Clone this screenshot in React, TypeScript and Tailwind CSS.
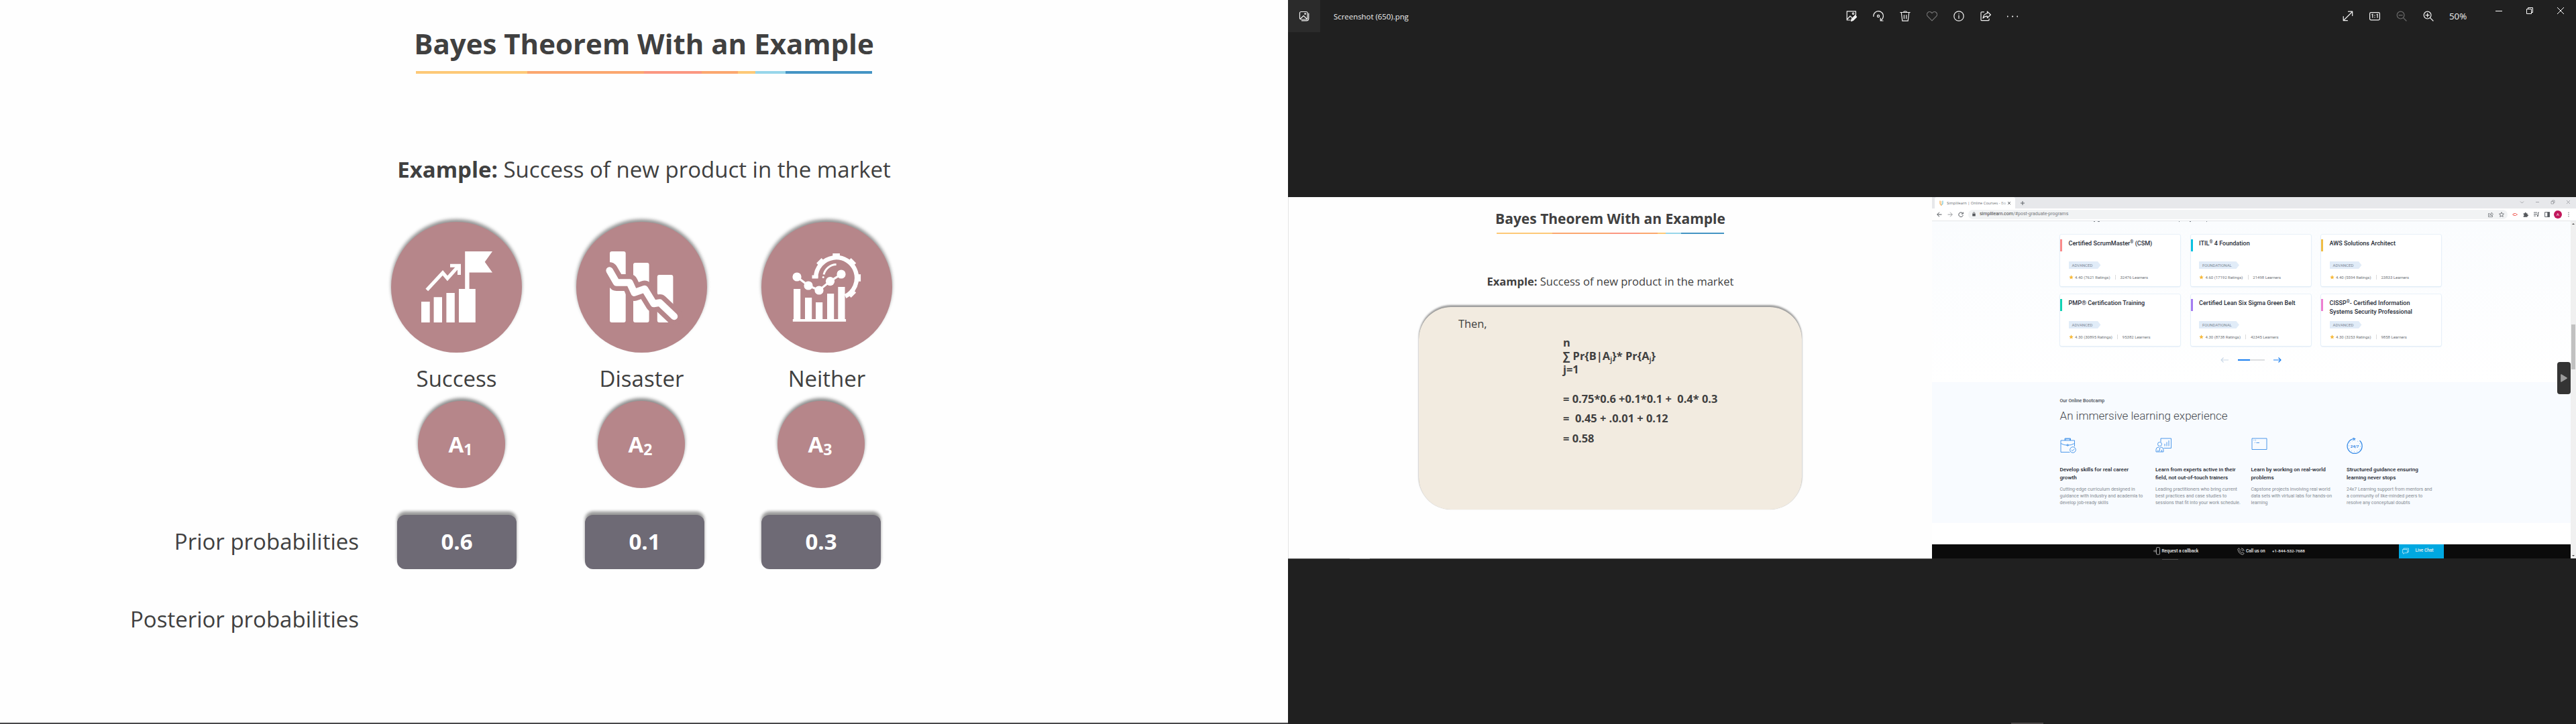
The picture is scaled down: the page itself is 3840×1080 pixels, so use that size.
import React from 'react'

type Accent = { color: string; width: string }

const accents: Accent[] = [
  { color: 'bg-[#fdc977]', width: 'w-[24.5%]' },
  { color: 'bg-[#fba76f]', width: 'w-[25.5%]' },
  { color: 'bg-[#fb9781]', width: 'w-[12.7%]' },
  { color: 'bg-[#fba76f]', width: 'w-[7.9%]' },
  { color: 'bg-[#fdc977]', width: 'w-[3.8%]' },
  { color: 'bg-[#97d6ea]', width: 'w-[6.6%]' },
  { color: 'bg-[#4494c4]', width: 'w-[19%]' },
]

function AccentBar({ className }: { className: string }) {
  return (
    <div className={`flex ${className}`}>
      {accents.map((a, i) => (
        <span key={i} className={`h-full ${a.color} ${a.width}`} />
      ))}
    </div>
  )
}

/* ---------- Slide with outcomes ---------- */

function GrowthIcon() {
  return (
    <svg viewBox="583 331 195 195" className="size-full" fill="#fff">
      <path d="M628 450h12.700v31h-12.700zM646.600 443.200h12.400v37.800h-12.400zM665.400 437h12.400v44h-12.400zM684 431h24.800v50H684z" />
      <path d="M693.200 375H734l-11.300 15.700L734 406.500h-34.400V432h-6.400z" />
      <path d="M636.300 432.500L660 407l7 8.200 17-19" fill="none" stroke="#fff" strokeWidth="5.200" />
      <path d="M671 396.300h13.500V410" fill="none" stroke="#fff" strokeWidth="5" />
    </svg>
  )
}

function DeclineIcon() {
  const line = 'M908.600 403.500L919 421.500h19.500l7 15 15.500-5.500 13.500 22 9-1.500L1005 472'
  return (
    <svg viewBox="859 331 195 195" className="size-full" fill="#fff">
      <rect x="909" y="375" width="23.700" height="106" rx="3" />
      <rect x="944" y="392" width="23.600" height="89" rx="3" />
      <rect x="979.800" y="410" width="23.600" height="71" rx="3" />
      <path d={line} fill="none" stroke="#b6868a" strokeWidth="25" strokeLinejoin="round" strokeLinecap="round" />
      <path d={line} fill="none" stroke="#fff" strokeWidth="10.500" strokeLinejoin="round" strokeLinecap="round" />
    </svg>
  )
}

function AnalysisIcon() {
  const teeth = [0, 45, -45, 90, 135]
  const nodes = [[1188, 413], [1205, 426], [1221, 433], [1237.5, 419.6], [1254, 409]]
  return (
    <svg viewBox="1135 331 195 195" className="size-full" fill="#fff">
      <path d="M1183 431h10.200v46H1183zM1200 444h10.200v33H1200zM1216 451h10.200v26H1216zM1233 438h10.200v39H1233zM1249.300 428h10.200v49h-10.200zM1181.800 476h79.300v3.700h-79.300z" />
      <path d="M1216.100 414.500A30.500 30.500 0 1 1 1260 442" fill="none" stroke="#fff" strokeWidth="6.500" />
      {teeth.map((t) => (
        <rect key={t} x="1241.300" y="378" width="10.600" height="6" transform={`rotate(${t} 1246.600 414.500)`} />
      ))}
      <path d="M1210.500 410.500h9v5h-9z" />
      <path d="M1228 409.500A19.500 19.500 0 0 1 1246.600 394.500" fill="none" stroke="#fff" strokeWidth="3" />
      <circle cx="1227.200" cy="413.500" r="1.500" />
      <path d="M1188 413l17 13 16 7 16.500-13.400L1254 409" fill="none" stroke="#fff" strokeWidth="3.200" />
      {nodes.map(([x, y]) => (
        <circle key={x} cx={x} cy={y} r="6.600" />
      ))}
    </svg>
  )
}

const outcomes = [
  { label: 'Success', Icon: GrowthIcon },
  { label: 'Disaster', Icon: DeclineIcon },
  { label: 'Neither', Icon: AnalysisIcon },
]

function PriorBox({ value, className = '' }: { value: string; className?: string }) {
  return (
    <div className={`flex h-[81px] w-[178px] items-center justify-center rounded-xl bg-[#6e6a75] pb-[2px] font-bold text-white shadow-[0_-5px_4px_rgba(0,0,0,0.4)] ${className}`}>
      {value}
    </div>
  )
}

function OutcomeSlide() {
  return (
    <section className="flex h-[1080px] w-[1920px] shrink-0 flex-col bg-[#fefefe] pt-[35px] text-[33px] leading-[48px] text-[#404040]">
      <h1 className="text-center text-[42px] font-bold leading-[60px]">Bayes Theorem With an Example</h1>
      <AccentBar className="mx-auto mt-[11px] h-1 w-[681px]" />
      <p className="mt-[119px] text-center">
        <b>Example:</b> Success of new product in the market
      </p>
      <div className="mt-[54px] flex gap-[81px] pl-[583px]">
        {outcomes.map(({ label, Icon }) => (
          <div key={label} className="flex w-[195px] flex-col items-center">
            <div className="size-[195px] rounded-full bg-[#b6868a] shadow-[0_-4px_5px_rgba(0,0,0,0.42)]">
              <Icon />
            </div>
            <span className="mt-[15px]">{label}</span>
          </div>
        ))}
      </div>
      <div className="mt-[9px] flex gap-[138px] pl-[623px]">
        {['1', '2', '3'].map((n) => (
          <div key={n} className="flex size-[130px] items-center justify-center rounded-full bg-[#b6868a] pr-[3px] font-bold text-white shadow-[0_-4px_5px_rgba(0,0,0,0.45)]">
            A<span className="relative top-[7px] text-[23px]">{n}</span>
          </div>
        ))}
      </div>
      <div className="mt-[40px] flex items-center">
        <span className="w-[535px] pb-[2px] text-right">Prior probabilities</span>
        <PriorBox value="0.6" className="ml-[57px]" />
        <PriorBox value="0.1" className="ml-[102px]" />
        <PriorBox value="0.3" className="ml-[85px]" />
      </div>
      <span className="mt-[51px] w-[535px] text-right">Posterior probabilities</span>
      <div className="mt-auto h-[2px] bg-[#48484a]" />
    </section>
  )
}

/* ---------- Photo viewer chrome ---------- */

function Glyph({ children, className = '', box = '0 0 16 16' }: { children: React.ReactNode; className?: string; box?: string }) {
  return (
    <svg viewBox={box} className={`size-4 shrink-0 ${className}`} fill="none" stroke="#f2f2f2" strokeWidth="1.200" strokeLinecap="round" strokeLinejoin="round">
      {children}
    </svg>
  )
}

function ViewerBar() {
  return (
    <header className="flex h-12 items-center text-[#f0f0f0]">
      <div className="flex size-12 items-center justify-center bg-[#2b2b2b]">
        <Glyph>
          <rect x="1.500" y="1.500" width="11.500" height="11.500" rx="2" />
          <path d="M2.500 12l4.700-4.500L12 12M14.800 4v7.500a3.300 3.300 0 0 1-3.300 3.300H4.500" />
          <circle cx="9.600" cy="4.600" r=".8" />
        </Glyph>
      </div>
      <span className="ml-5 w-[764px] pt-px text-[11.4px]">Screenshot (650).png</span>
      <div className="flex gap-6">
        <Glyph>
          <path d="M6 14H1.200V.8h13.200V7M1.800 12.500L6 8l2.500 2.200" />
          <circle cx="10.500" cy="4.300" r="1.200" />
          <path d="M8.300 12.200L13.500 7l2.200 2.200-5.200 5.200-3 1z" fill="#f2f2f2" />
        </Glyph>
        <Glyph>
          <path d="M.8 8.500a7.300 7.300 0 1 1 11.500 5.400M15 15h-3.800v-4" />
          <circle cx="8" cy="8" r="1.600" />
        </Glyph>
        <Glyph>
          <path d="M.8 2.500h14.400M5.500 2.300C5.800.2 10.200.2 10.500 2.300M2.300 2.800l1.500 12.400h8.400l1.500-12.400M6.400 6.500v5.200M9.600 6.500v5.200" />
        </Glyph>
        <Glyph className="opacity-40">
          <path d="M8 14.800L1.600 8.300a3.900 3.900 0 0 1 0-5.500 3.900 3.900 0 0 1 5.500 0L8 3.700l.9-.9a3.900 3.900 0 0 1 5.500 0 3.900 3.900 0 0 1 0 5.500z" />
        </Glyph>
        <Glyph>
          <circle cx="8" cy="8" r="7.200" />
          <path d="M8 7v4.500M8 4.600v.2" />
        </Glyph>
        <Glyph>
          <path d="M5.500 1.800H2.300Q1 1.800 1 3.100v10.300q0 1.300 1.300 1.300h9.500q1.300 0 1.300-1.300V12" />
          <path d="M10.400 1.200L15.400 6l-5 4.700V8.200C7.500 8 5.700 9 4 11.200c.3-3.700 2.400-6.600 6.400-7.200z" />
        </Glyph>
        <Glyph>
          <path d="M.5 8.600h.2M8 8.600h.2M15.300 8.600h.2" strokeWidth="2" />
        </Glyph>
      </div>
      <div className="ml-[484px] flex gap-6">
        <Glyph>
          <path d="M1.500 14.500l13-13M8.500 1.200h6.200v6.200M1.200 8.500v6.200h6.200" />
        </Glyph>
        <svg viewBox="0 0 16 16" className="size-4" fill="none" stroke="#f2f2f2" strokeWidth="1.200">
          <rect x=".6" y="2.600" width="14.800" height="11.200" rx="1.800" />
          <path d="M3.500 6l1.300-.7v5.400M10.700 6l1.300-.7v5.400M8 6.200v1.200M8 9.200v1.200" />
        </svg>
        <Glyph className="opacity-35">
          <circle cx="6.600" cy="6.600" r="5.400" />
          <path d="M10.600 10.600l4.400 4.400M4 6.600h5.200" />
        </Glyph>
        <Glyph>
          <circle cx="6.600" cy="6.600" r="5.400" />
          <path d="M10.600 10.600l4.400 4.400M4 6.600h5.200M6.600 4v5.200" />
        </Glyph>
      </div>
      <span className="ml-[23px] text-[13.3px] leading-[46px]">50%</span>
      <div className="ml-auto flex self-start">
        {['M0 5.500h10', 'M.5 2.500h7v7h-7zM2.500 2.500v-2h7v7h-2', 'M0 0l10 10M10 0L0 10'].map((d) => (
          <div key={d} className="flex h-8 w-[46px] items-center justify-center">
            <svg viewBox="0 0 10 10" className="size-[10px] overflow-visible" fill="none" stroke="#fff">
              <path d={d} />
            </svg>
          </div>
        ))}
      </div>
    </header>
  )
}

/* ---------- Worked solution slide ---------- */

function Sub({ children }: { children: React.ReactNode }) {
  return <span className="relative top-[3px] text-[11px] font-semibold leading-none">{children}</span>
}

function SolutionSlide() {
  return (
    <section className="h-[540px] w-[960px] shrink-0 border-l border-[#e4e4e4] bg-[#fefefe] pt-[17px] text-[16.4px] leading-6 text-[#404040]">
      <h2 className="text-center text-[21px] font-bold leading-[30px]">Bayes Theorem With an Example</h2>
      <AccentBar className="mx-auto mt-[6px] h-[2px] w-[340px]" />
      <p className="mt-[59px] text-center text-[16.5px]">
        <b>Example:</b> Success of new product in the market
      </p>
      <div className="mx-auto mt-[26px] flex h-[302px] w-[571px] flex-col whitespace-pre rounded-[48px] bg-[#f2ebe0] pl-[215px] pt-[13px] font-bold shadow-[0_-2.5px_2.5px_rgba(0,0,0,0.38),0_0_1px_rgba(0,0,0,0.25)]">
        <span className="-ml-[156px] font-normal">Then,</span>
        <div className="mt-[6px] leading-5">
          <div>n</div>
          <div className="h-5">∑ Pr{'{'}B|A<Sub>j</Sub>{'}'}* Pr{'{'}A<Sub>j</Sub>{'}'}</div>
          <div>j=1</div>
        </div>
        <span className="mt-[22px]">{'= 0.75*0.6 +0.1*0.1 +  0.4* 0.3'}</span>
        <span className="mt-[5px]">{'=  0.45 + .0.01 + 0.12'}</span>
        <span className="mt-[6px]">= 0.58</span>
      </div>
    </section>
  )
}

/* ---------- Browser window ---------- */

function BrowserTabs() {
  return (
    <div className="flex h-[17px] bg-[#e7e8eb] text-[#6b6e73]">
      <div className="ml-1 flex w-[120px] items-center rounded-t-[3px] bg-white pl-[7px]">
        <svg viewBox="0 0 6 8" className="h-2 w-[6px]" fill="none" strokeWidth="1.300" strokeLinecap="round">
          <path d="M1 1v3.500Q1 6 2.800 6.200V7.500" stroke="#fbb45c" />
          <path d="M3 1.500v3" stroke="#fbd9a8" />
          <path d="M5 1v3.500Q5 5.800 3.500 6.200" stroke="#7ccbe0" />
        </svg>
        <span className="ml-[5px] w-[89px] overflow-hidden whitespace-nowrap text-[5.7px] leading-[10px]">
          Simplilearn | Online Courses - <span className="opacity-60">Bo</span>
        </span>
        <svg viewBox="0 0 4 4" className="ml-[2px] size-1 overflow-visible" stroke="#55585c" strokeWidth=".9">
          <path d="M0 0l4 4M4 0L0 4" />
        </svg>
      </div>
      <svg viewBox="0 0 6 6" className="ml-[8px] mt-[6px] size-[6px]" stroke="#5f6368" strokeWidth="1">
        <path d="M0 3h6M3 0v6" />
      </svg>
      <div className="ml-auto mr-[9px] flex gap-[18px] pt-[5px]">
        {['M0 1.500l2.500 2.500L5 1.500', 'M0 2.500h5', 'M0 1.500h3.500V5H0zM1.500 1.500V0H5v3.500H3.500', 'M0 0l5 5M5 0L0 5'].map((d) => (
          <svg key={d} viewBox="0 0 5 5" className="size-[5px] overflow-visible" fill="none" stroke="#8b8e93" strokeWidth=".7">
            <path d={d} />
          </svg>
        ))}
      </div>
    </div>
  )
}

function Tiny({ children, className = '' }: { children: React.ReactNode; className?: string }) {
  return (
    <svg viewBox="0 0 8 8" className={`size-2 shrink-0 overflow-visible ${className}`} fill="none" stroke="#5f6368" strokeWidth="1">
      {children}
    </svg>
  )
}

function BrowserToolbar() {
  return (
    <div className="flex h-[18.5px] items-center border-b border-[#e3e6e9] bg-white">
      <div className="flex gap-2 pl-[7px]">
        <Tiny><path d="M7.500 4H.8M4 .7L.7 4 4 7.300" stroke="#50545a" /></Tiny>
        <Tiny className="opacity-60"><path d="M.5 4h6.700M4 .7L7.300 4 4 7.300" /></Tiny>
        <Tiny><path d="M7 2.600A3.300 3.300 0 1 0 7.300 5M7.300.5v2.600H4.800" stroke="#50545a" /></Tiny>
      </div>
      <div className="ml-[7px] flex h-[14px] w-[804px] items-center rounded-full bg-[#f1f3f4] pl-[6px] pr-[5px]">
        <svg viewBox="0 0 6 8" className="h-[7px] w-[5px]">
          <path d="M.3 3h5.400v4.500H.3z" fill="#55585c" />
          <path d="M1.500 3.200V2a1.500 1.500 0 0 1 3 0v1.200" fill="none" stroke="#55585c" strokeWidth=".9" />
        </svg>
        <span className="ml-[6px] font-[Roboto,sans-serif] text-[7px] leading-[13px] text-[#777a7e]">
          <span className="text-[#3c4043]">simplilearn.com</span>/#post-graduate-programs
        </span>
        <Tiny className="ml-auto"><path d="M2.500 2.500H.5v5h6V5.500M2.300 5.500C2.500 3.500 3.700 2.700 5 2.700V1l2.600 2.500L5 6V4.300c-1.200 0-2 .4-2.700 1.200z" strokeWidth=".7" /></Tiny>
        <Tiny className="ml-2"><path d="M4 .6l1 2.300 2.500.2-1.900 1.700.6 2.500L4 6 1.800 7.300l.6-2.500L.5 3.100 3 2.900z" strokeWidth=".8" /></Tiny>
      </div>
      <div className="ml-[7px] flex items-center">
        <Tiny><path d="M0 4h1.500M6.500 4H8M2 2.500h3.500L6.700 4 5.500 5.500H2z" stroke="#f2716b" /></Tiny>
        <Tiny className="ml-2"><path d="M.7 2.300h2V1.700a1 1 0 0 1 2 0v.6h1.800v1.900h.5a1 1 0 0 1 0 2h-.5v1.500H.7V6a1 1 0 0 0 0-2z" fill="#55585c" stroke="none" /></Tiny>
        <Tiny className="ml-2"><path d="M0 1h5M0 3.500h5M0 6h3M6.500 6V1H8" /><circle cx="5.800" cy="6" r=".8" fill="#5f6368" /></Tiny>
        <Tiny className="ml-2"><path d="M.6.6h6.800v6.800H.6z" /><path d="M4.800.6h2.600v6.800H4.800z" fill="#55585c" /></Tiny>
        <span className="ml-[6px] flex size-3 items-center justify-center rounded-full bg-[#c2185b] text-[6px] leading-none text-white">A</span>
        <svg viewBox="0 0 2 8" className="ml-[9px] h-2 w-[2px]" fill="#5f6368">
          <circle cx="1" cy="1.200" r=".7" /><circle cx="1" cy="4" r=".7" /><circle cx="1" cy="6.800" r=".7" />
        </svg>
      </div>
    </div>
  )
}

function Reg() {
  return <span className="relative -top-[3px] text-[6.5px] font-normal leading-none">®</span>
}

const courses: { title: React.ReactNode; accent: string; level: string; tag: string; rating: string; learners: string }[] = [
  { title: <>Certified ScrumMaster<Reg /> (CSM)</>, accent: 'bg-[#fb8a8a]', level: 'ADVANCED', tag: 'w-[48px]', rating: '4.40 (7621 Ratings)', learners: '32476 Learners' },
  { title: <>ITIL<Reg /> 4 Foundation</>, accent: 'bg-[#0bc1e0]', level: 'FOUNDATIONAL', tag: 'w-[60px]', rating: '4.60 (17192 Ratings)', learners: '21498 Learners' },
  { title: 'AWS Solutions Architect', accent: 'bg-[#f0bd45]', level: 'ADVANCED', tag: 'w-[48px]', rating: '4.40 (5594 Ratings)', learners: '23833 Learners' },
  { title: 'PMP® Certification Training', accent: 'bg-[#12d3b4]', level: 'ADVANCED', tag: 'w-[48px]', rating: '4.30 (30895 Ratings)', learners: '95382 Learners' },
  { title: 'Certified Lean Six Sigma Green Belt', accent: 'bg-[#a57cf0]', level: 'FOUNDATIONAL', tag: 'w-[60px]', rating: '4.30 (8738 Ratings)', learners: '42345 Learners' },
  { title: <>CISSP<Reg />- Certified Information<br />Systems Security Professional</>, accent: 'bg-[#ee7fd0]', level: 'ADVANCED', tag: 'w-[48px]', rating: '4.30 (3253 Ratings)', learners: '9858 Learners' },
]

function CourseCard({ course }: { course: (typeof courses)[number] }) {
  return (
    <article className="relative h-[77px] rounded-[2px] bg-white pl-[12.5px] pt-[7.5px] shadow-[0_0_0_0.7px_#e3eef8,0_1px_2px_rgba(150,190,230,0.45)]">
      <span className={`absolute left-0 top-[7.5px] h-[18px] w-[3px] ${course.accent}`} />
      <h3 className="h-[26px] whitespace-nowrap text-[9.05px] font-medium leading-[13px] text-[#272c37]">{course.title}</h3>
      <div className={`mt-[7px] h-[11px] bg-[#e1ecf8] pl-[5px] text-[6px] leading-[11px] text-[#7d8794] [clip-path:polygon(0_0,calc(100%-4.5px)_0,100%_50%,calc(100%-4.5px)_100%,0_100%)] ${course.tag}`}>
        {course.level}
      </div>
      <div className="mt-[8.5px] flex items-center text-[6px] leading-2 text-[#6f7378]">
        <svg viewBox="0 0 24 24" className="size-[7px]" fill="#f6b93b">
          <path d="M12 1l3.300 7.200 7.700.9-5.700 5.300 1.500 7.800L12 18.300l-6.800 3.900 1.500-7.800L1 9.100l7.700-.9z" />
        </svg>
        <span className="ml-[2.5px]">{course.rating}</span>
        <span className="ml-[7.5px] h-[7px] w-px bg-[#dcdcdc]" />
        <span className="ml-[6.500px]">{course.learners}</span>
      </div>
    </article>
  )
}

function BriefcaseIcon() {
  return (
    <>
      <path d="M14.500 21.500H1V4h20.500v9M1 8.500q10 5.500 20.500 0M8 4V1.800h6.500V4M7 4V1h8.500v3" />
      <circle cx="11.200" cy="11" r="1.200" />
      <circle cx="19" cy="18" r="4.300" />
      <path d="M17 18l1.500 1.600 2.700-3" />
    </>
  )
}

function TrainerIcon() {
  return (
    <>
      <path d="M8 6V1h15.500v14.500H12.500M14 12.500V9M17 12.500V6.500M20 12.500V4" />
      <circle cx="6.500" cy="9.500" r="3" />
      <path d="M1 21v-3.500q0-3 3.500-3.500l2 1.500 2-1.500q3.500.5 3.500 3.500V21zM6.500 16v4M4 18v3M9.500 18v3" />
    </>
  )
}

function ConsoleIcon() {
  return (
    <>
      <path d="M1 1h22v16.500H1z" />
      <path d="M3.500 3.500h1M6 3.500h1M5 7.500l1-1M7.500 7.500H12" />
    </>
  )
}

function ClockIcon() {
  return (
    <>
      <path d="M10.500 1.600A11 11 0 1 0 19.500 4.300M9.500.2l3 1.500-2.500 2" strokeWidth="1.300" />
      <circle cx="12" cy="12.500" r="8.500" strokeWidth=".9" strokeDasharray=".8 3.650" />
      <text x="12" y="14.600" fontSize="6" textAnchor="middle" fill="#2a82e4" stroke="none" className="font-bold">24/7</text>
    </>
  )
}

const benefits = [
  { Icon: BriefcaseIcon, title: ['Develop skills for real career', 'growth'], body: ['Cutting-edge curriculum designed in', 'guidance with industry and academia to', 'develop job-ready skills'] },
  { Icon: TrainerIcon, title: ['Learn from experts active in their', 'field, not out-of-touch trainers'], body: ['Leading practitioners who bring current', 'best practices and case studies to', 'sessions that fit into your work schedule.'] },
  { Icon: ConsoleIcon, title: ['Learn by working on real-world', 'problems'], body: ['Capstone projects involving real world', 'data sets with virtual labs for hands-on', 'learning'] },
  { Icon: ClockIcon, title: ['Structured guidance ensuring', 'learning never stops'], body: ['24x7 Learning support from mentors and', 'a community of like-minded peers to', 'resolve any conceptual doubts'] },
]

function Bootcamp() {
  return (
    <section className="h-[210px] bg-[#f8fbff] pl-[190.5px] pt-[22.5px]">
      <p className="text-[7px] font-medium leading-[10px] text-[#4a4f57]">Our Online Bootcamp</p>
      <h2 className="mt-[6px] text-[17px] font-light leading-[22px] text-[#45494f]">An immersive learning experience</h2>
      <div className="mt-[22px] flex">
        {benefits.map(({ Icon, title, body }) => (
          <div key={title[0]} className="w-[142.5px] whitespace-nowrap">
            <svg viewBox="0 0 24 24" className="size-6" fill="none" stroke="#3a8de8" strokeWidth=".9">
              <Icon />
            </svg>
            <h3 className="mt-[17px] text-[8.1px] font-medium leading-3 text-[#20242d]">
              {title.map((t) => <div key={t}>{t}</div>)}
            </h3>
            <div className="mt-[7.5px] text-[7px] leading-[10px] text-[#858b93]">
              {body.map((t) => <div key={t}>{t}</div>)}
            </div>
          </div>
        ))}
      </div>
    </section>
  )
}

function ContactBar() {
  return (
    <footer className="flex h-[21.5px] items-center bg-[#0b0b0b] text-[6.5px] font-medium leading-[15px] text-[#ededed]">
      <svg viewBox="0 0 10 12" className="ml-[330px] h-3 w-[10px]" fill="none" stroke="#c9c9c9" strokeWidth=".8">
        <rect x="4.500" y=".6" width="5" height="10.500" rx="1" />
        <path d="M3 4v4M1 4.800v2.400" />
      </svg>
      <span className="ml-[2.5px] w-[55px] whitespace-nowrap pt-px">Request a callback</span>
      <svg viewBox="0 0 11 11" className="ml-[57.5px] size-[11px]" fill="none" stroke="#c9c9c9" strokeWidth=".8">
        <path d="M.8 2.200L2.500.7l2 2.600-1 1.400q1 2 3 3l1.200-1 2.500 1.800L8.500 10.300Q2 9.500.8 2.200zM6 .7q3.800.6 4.300 4.300M6 2.800q1.800.4 2.300 2.200" />
      </svg>
      <span className="ml-[2px] w-[29px] whitespace-nowrap pt-px">Call us on</span>
      <span className="ml-[10px] pt-px text-[6.25px]">+1-844-532-7688</span>
      <div className="ml-auto mr-[189px] flex h-full w-[67px] items-center bg-[#00a8e1] pl-[5px]">
        <svg viewBox="0 0 10 10" className="size-[10px]" fill="none" stroke="#d8f3fc" strokeWidth=".7">
          <path d="M.6 2.500h7v5.300H3.500L1.800 9.300V7.800H.6zM2 2.500V1h7.500v5.500H7.600" />
        </svg>
        <span className="ml-[9.500px] pb-px">Live Chat</span>
      </div>
    </footer>
  )
}

function BrowserWindow() {
  return (
    <section className="relative flex h-[539px] w-[960px] shrink-0 flex-col bg-white font-[Roboto,sans-serif]">
      <div className="font-['Open_Sans',sans-serif]">
        <BrowserTabs />
        <BrowserToolbar />
      </div>
      <div className="flex flex-1">
        <div className="flex w-[952px] flex-col">
          <div className="h-[240.5px] bg-linear-to-b from-[#fafcfe] to-white pl-[191px]">
            <div className="h-[20px]">
              <div className="h-px overflow-hidden">
                <svg viewBox="0 0 180 1" className="ml-[50px] h-px w-[180px]" fill="#7d838b">
                  <path d="M0 0h2v1H0zM6 0h3v1H6zM127 0h1v1h-1zM143 0h2v1h-2zM168 0h1v1h-1z" />
                </svg>
              </div>
            </div>
            <div className="grid w-[568px] grid-cols-3 gap-x-[15.5px] gap-y-3">
              {courses.map((c) => <CourseCard key={c.rating} course={c} />)}
            </div>
            <div className="flex h-[43px] items-center pl-[238.5px]">
              <svg viewBox="0 0 12 8" className="h-2 w-3" fill="none" stroke="#c9d7e6" strokeWidth="1.100">
                <path d="M12 4H1M4.500.5L1 4l3.500 3.500" />
              </svg>
              <div className="ml-[14.500px] h-[2px] w-[39.500px] bg-[#dcdee1]">
                <div className="h-full w-[18px] bg-[#1a7ff0]" />
              </div>
              <svg viewBox="0 0 12 8" className="ml-[13.500px] h-2 w-3" fill="none" stroke="#1a7ff0" strokeWidth="1.200">
                <path d="M0 4h11M7.500.5L11 4 7.500 7.500" />
              </svg>
            </div>
          </div>
          <Bootcamp />
          <div className="mt-auto">
            <ContactBar />
          </div>
        </div>
        <div className="flex w-2 flex-col items-center bg-[#f0f0f0] py-[3px]">
          <svg viewBox="0 0 4 2" className="h-[2px] w-1" fill="#505050"><path d="M0 2l2-2 2 2z" /></svg>
          <div className="mt-[149px] h-[67px] w-[6.5px] bg-[#c1c1c1]" />
          <svg viewBox="0 0 4 2" className="mt-auto h-[2px] w-1" fill="#505050"><path d="M0 0l2 2 2-2z" /></svg>
        </div>
      </div>
      <div className="absolute right-2 top-[246px] flex h-12 w-5 items-center justify-center rounded bg-[#343434]">
        <svg viewBox="0 0 10 12" className="h-3 w-[10px]" fill="#9c9c9c" stroke="#9c9c9c" strokeWidth="1.500" strokeLinejoin="round">
          <path d="M.9 1L9.100 6 .9 11z" />
        </svg>
      </div>
    </section>
  )
}

function PhotoViewer() {
  return (
    <div className="flex h-[1080px] w-[1920px] shrink-0 flex-col bg-[#202020]">
      <ViewerBar />
      <div className="mt-[246px] flex h-[539px] overflow-hidden">
        <SolutionSlide />
        <BrowserWindow />
      </div>
      <div className="flex h-px w-[960px] bg-[#5c5c5c] pl-[92px]">
        <span className="w-[30px] bg-[#8c8c8c]" />
      </div>
      <div className="ml-[1303px] h-px w-6 bg-[#4c4c4c]" />
      <div className="mt-auto ml-[1078px] h-[2px] w-12 bg-[#4c4848]" />
    </div>
  )
}

export default function App() {
  return (
    <main className="flex h-[1080px] w-[3840px] overflow-hidden bg-white font-['Open_Sans','Noto_Sans',sans-serif]">
      <OutcomeSlide />
      <PhotoViewer />
    </main>
  )
}
